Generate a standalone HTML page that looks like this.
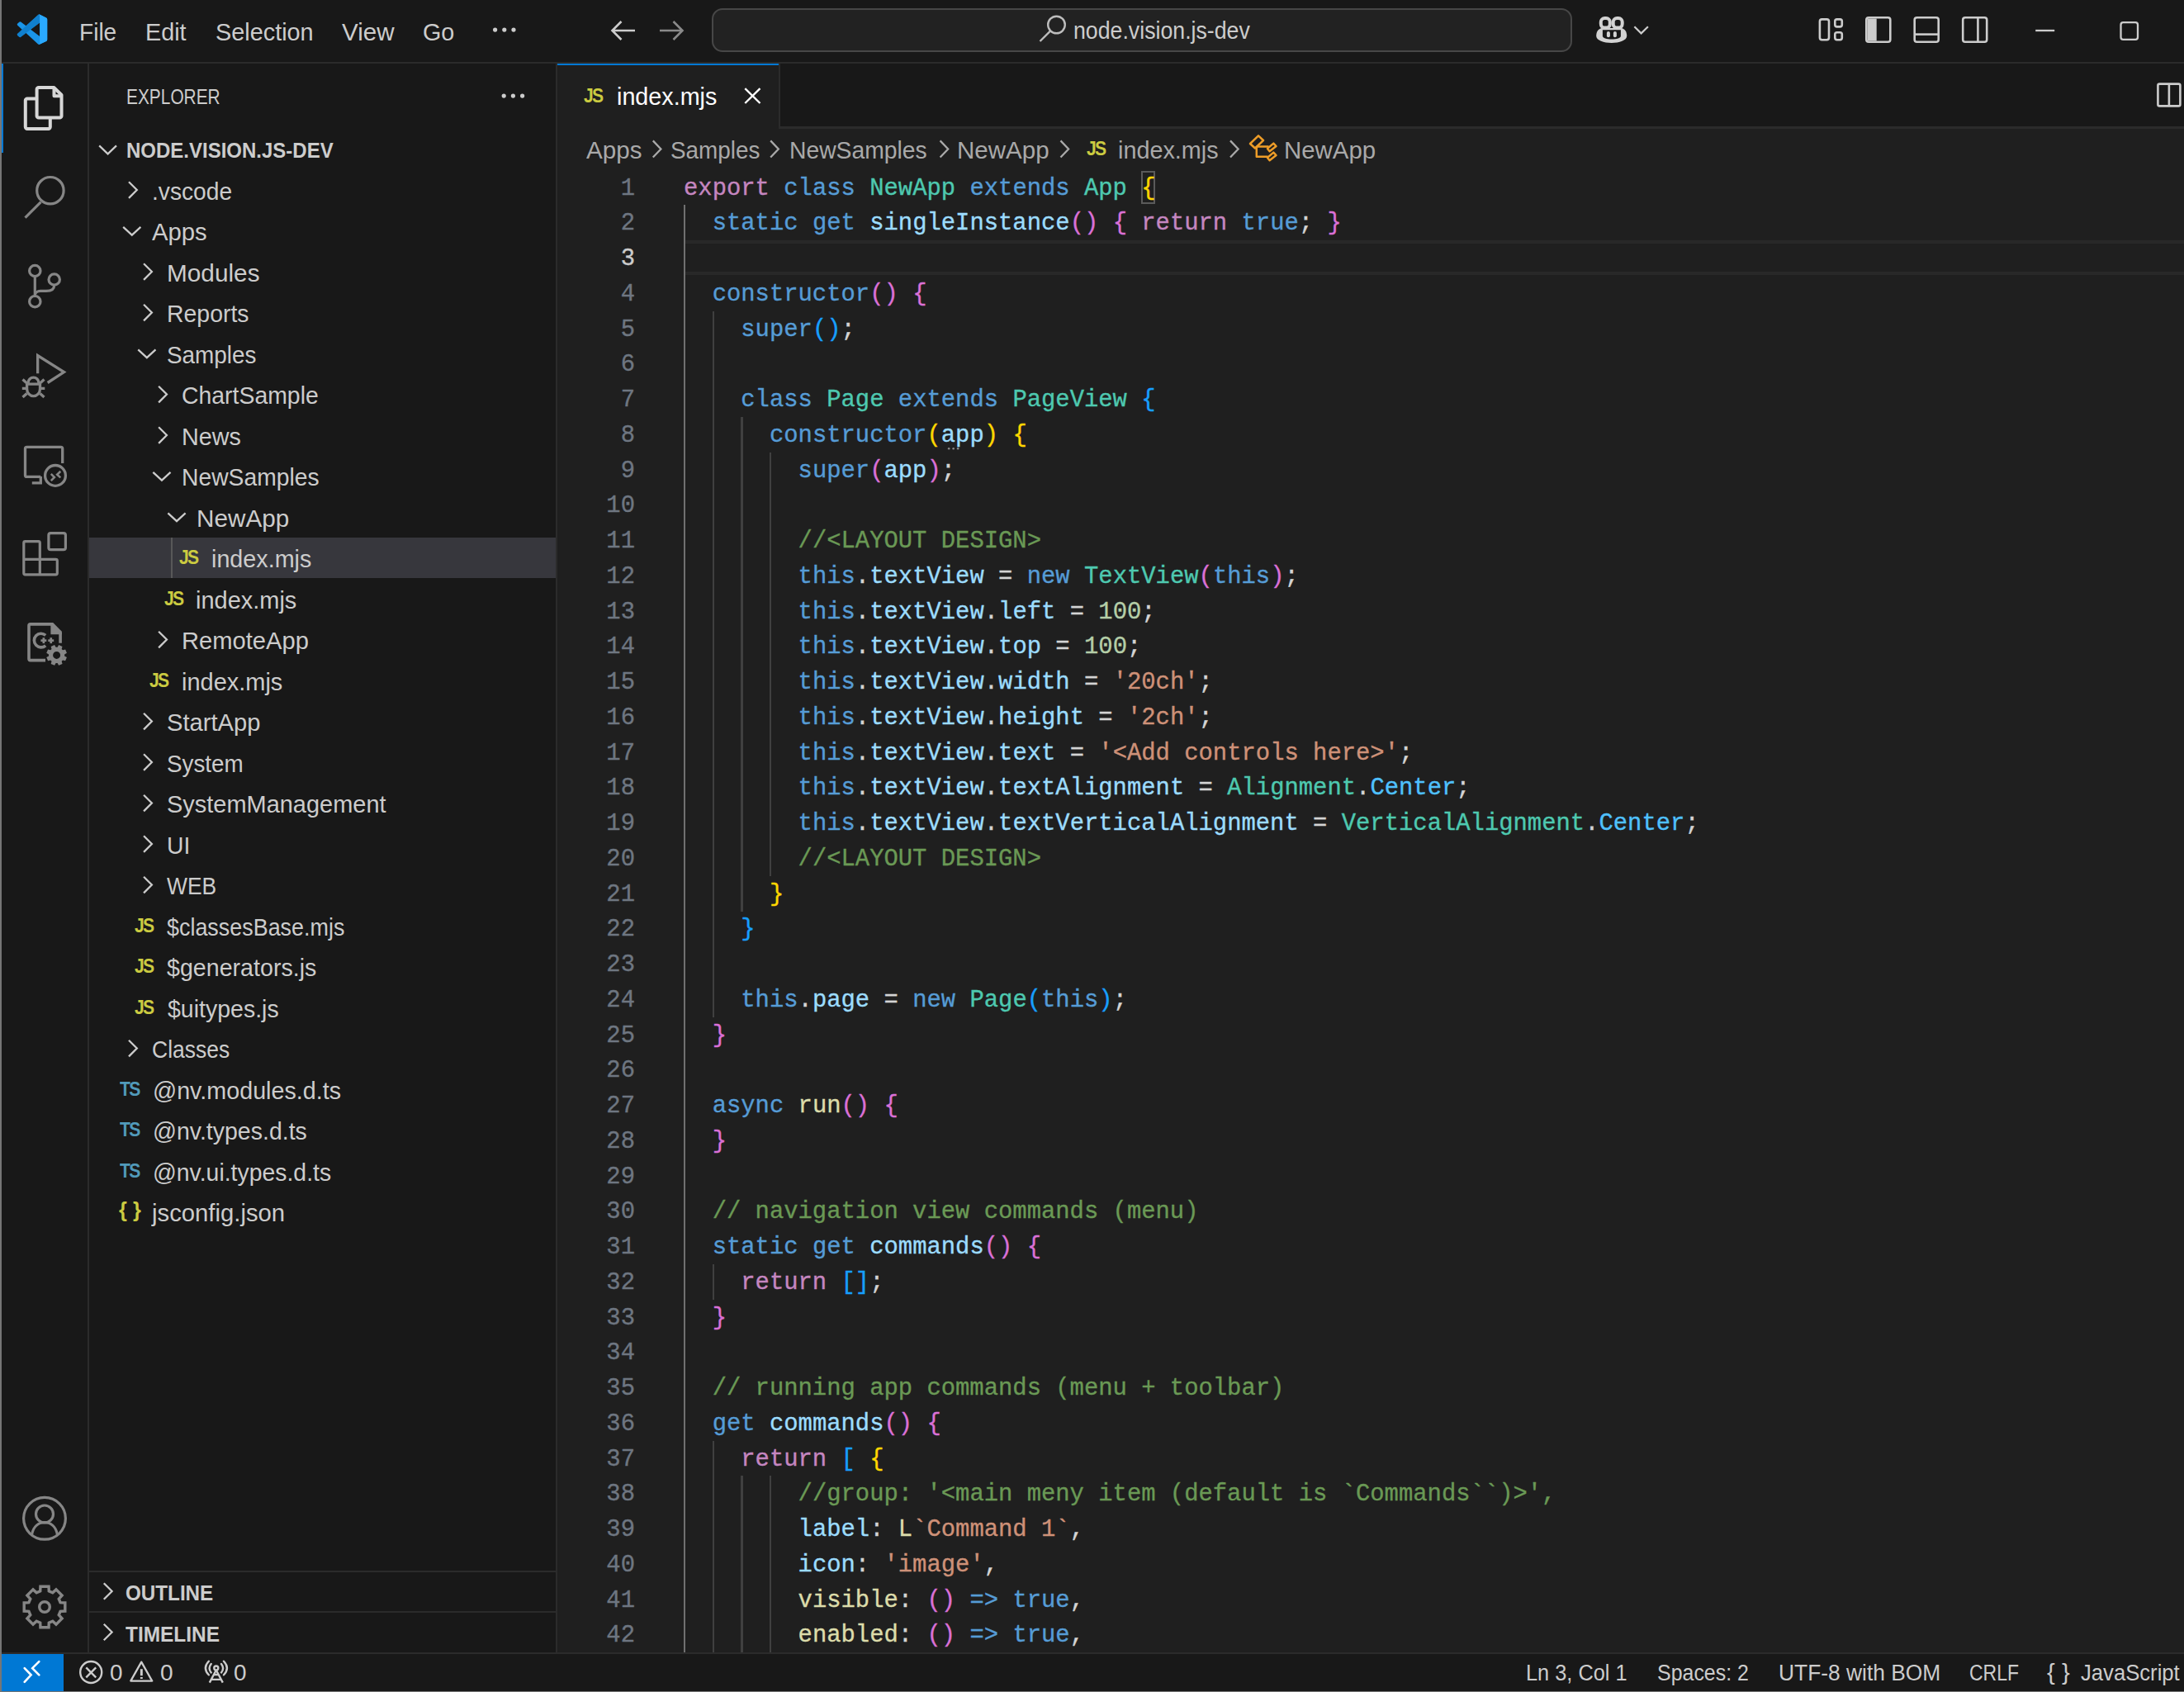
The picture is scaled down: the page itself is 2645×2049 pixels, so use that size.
<!DOCTYPE html>
<html><head><meta charset="utf-8"><style>
html,body{margin:0;padding:0;width:2645px;height:2049px;overflow:hidden;background:#181818}
.r{position:absolute}
.t{position:absolute;font-family:"Liberation Sans", sans-serif;white-space:pre}
.m{position:absolute;font-family:"Liberation Mono", monospace;white-space:pre;-webkit-text-stroke:0.35px currentColor}
svg{position:absolute;left:0;top:0}
</style></head><body>
<div class="r" style="left:0px;top:0px;width:2645px;height:75px;background:#181818;"></div>
<div class="r" style="left:0px;top:75px;width:2645px;height:2.2px;background:#2b2b2b;"></div>
<div class="r" style="left:0px;top:77px;width:106px;height:1924px;background:#181818;"></div>
<div class="r" style="left:105.8px;top:77px;width:2.3px;height:1924px;background:#2b2b2b;"></div>
<div class="r" style="left:108.1px;top:77px;width:564.9px;height:1924px;background:#181818;"></div>
<div class="r" style="left:672.8px;top:77px;width:2.2px;height:1924px;background:#2b2b2b;"></div>
<div class="r" style="left:675px;top:77px;width:1970px;height:1924px;background:#1f1f1f;"></div>
<div class="r" style="left:945px;top:77px;width:1700px;height:76.5px;background:#181818;"></div>
<div class="r" style="left:945px;top:153.3px;width:1700px;height:2.5px;background:#2b2b2b;"></div>
<div class="r" style="left:675px;top:77px;width:268px;height:78.8px;background:#1f1f1f;"></div>
<div class="r" style="left:675px;top:77px;width:268px;height:2.2px;background:#0078d4;"></div>
<div class="r" style="left:943px;top:77px;width:2.2px;height:78.8px;background:#2b2b2b;"></div>
<div class="r" style="left:0px;top:2001px;width:2645px;height:2.2px;background:#2b2b2b;"></div>
<div class="r" style="left:0px;top:2003.2px;width:2645px;height:46px;background:#181818;"></div>
<div class="r" style="left:2px;top:2003.2px;width:75px;height:45px;background:#0078d4;"></div>
<div class="r" style="left:0px;top:2047.8px;width:2645px;height:1.2px;background:#747474;"></div>
<div class="r" style="left:2px;top:77px;width:2.4px;height:108px;background:#0078d4;"></div>
<div class="r" style="left:0px;top:0px;width:1.9px;height:2049px;background:#767676;"></div>
<div class="t" style="left:96.08px;top:19.09px;font-size:29.25px;line-height:40.95px;color:#cccccc;font-weight:400;transform:scaleX(0.9595);transform-origin:0 0;">File</div>
<div class="t" style="left:175.68px;top:19.09px;font-size:29.25px;line-height:40.95px;color:#cccccc;font-weight:400;transform:scaleX(0.9846);transform-origin:0 0;">Edit</div>
<div class="t" style="left:260.68px;top:19.09px;font-size:29.25px;line-height:40.95px;color:#cccccc;font-weight:400;transform:scaleX(0.9859);transform-origin:0 0;">Selection</div>
<div class="t" style="left:413.68px;top:19.09px;font-size:29.25px;line-height:40.95px;color:#cccccc;font-weight:400;transform:scaleX(1.0120);transform-origin:0 0;">View</div>
<div class="t" style="left:511.68px;top:19.09px;font-size:29.25px;line-height:40.95px;color:#cccccc;font-weight:400;transform:scaleX(0.9821);transform-origin:0 0;">Go</div>
<div class="r" style="left:861.5px;top:10px;width:1042px;height:52.8px;box-sizing:border-box;border:2.2px solid #474747;border-radius:13px;background:#222222"></div>
<div class="t" style="left:1300.48px;top:16.99px;font-size:29.25px;line-height:40.95px;color:#cccccc;font-weight:400;transform:scaleX(0.9133);transform-origin:0 0;">node.vision.js-dev</div>
<div class="t" style="left:153.05px;top:99.51px;font-size:25.5px;line-height:35.70px;color:#cccccc;font-weight:400;transform:scaleX(0.8186);transform-origin:0 0;">EXPLORER</div>
<div class="t" style="left:153.07px;top:165.24px;font-size:25px;line-height:35.00px;color:#cccccc;font-weight:700;transform:scaleX(0.9597);transform-origin:0 0;">NODE.VISION.JS-DEV</div>
<div class="t" style="left:183.78px;top:211.99px;font-size:29.25px;line-height:40.95px;color:#cccccc;font-weight:400;transform:scaleX(0.9635);transform-origin:0 0;">.vscode</div>
<div class="t" style="left:183.78px;top:261.49px;font-size:29.25px;line-height:40.95px;color:#cccccc;font-weight:400;transform:scaleX(1.0009);transform-origin:0 0;">Apps</div>
<div class="t" style="left:202.08px;top:310.99px;font-size:29.25px;line-height:40.95px;color:#cccccc;font-weight:400;transform:scaleX(1.0178);transform-origin:0 0;">Modules</div>
<div class="t" style="left:202.08px;top:360.49px;font-size:29.25px;line-height:40.95px;color:#cccccc;font-weight:400;transform:scaleX(0.9718);transform-origin:0 0;">Reports</div>
<div class="t" style="left:202.08px;top:409.99px;font-size:29.25px;line-height:40.95px;color:#cccccc;font-weight:400;transform:scaleX(0.9527);transform-origin:0 0;">Samples</div>
<div class="t" style="left:219.78px;top:459.49px;font-size:29.25px;line-height:40.95px;color:#cccccc;font-weight:400;transform:scaleX(0.9709);transform-origin:0 0;">ChartSample</div>
<div class="t" style="left:219.78px;top:508.99px;font-size:29.25px;line-height:40.95px;color:#cccccc;font-weight:400;transform:scaleX(0.9848);transform-origin:0 0;">News</div>
<div class="t" style="left:219.78px;top:558.49px;font-size:29.25px;line-height:40.95px;color:#cccccc;font-weight:400;transform:scaleX(0.9669);transform-origin:0 0;">NewSamples</div>
<div class="t" style="left:238.08px;top:607.99px;font-size:29.25px;line-height:40.95px;color:#cccccc;font-weight:400;transform:scaleX(1.0151);transform-origin:0 0;">NewApp</div>
<div class="r" style="left:108.1px;top:650.8px;width:564.7px;height:49.5px;background:#37373d;"></div>
<div class="r" style="left:207px;top:650.8px;width:2.2px;height:49.5px;background:#585858;"></div>
<div class="t" style="left:217.28px;top:660.40px;font-size:23px;line-height:30px;color:#cbcb41;font-weight:700;letter-spacing:-1.8px;transform:scaleX(0.92);transform-origin:0 0">JS</div>
<div class="t" style="left:256.18px;top:657.49px;font-size:29.25px;line-height:40.95px;color:#cccccc;font-weight:400;transform:scaleX(0.9821);transform-origin:0 0;">index.mjs</div>
<div class="t" style="left:199.21px;top:709.90px;font-size:23px;line-height:30px;color:#cbcb41;font-weight:700;letter-spacing:-1.8px;transform:scaleX(0.92);transform-origin:0 0">JS</div>
<div class="t" style="left:237.48px;top:706.99px;font-size:29.25px;line-height:40.95px;color:#cccccc;font-weight:400;transform:scaleX(0.9902);transform-origin:0 0;">index.mjs</div>
<div class="t" style="left:219.78px;top:756.49px;font-size:29.25px;line-height:40.95px;color:#cccccc;font-weight:400;transform:scaleX(0.9965);transform-origin:0 0;">RemoteApp</div>
<div class="t" style="left:181.14px;top:808.90px;font-size:23px;line-height:30px;color:#cbcb41;font-weight:700;letter-spacing:-1.8px;transform:scaleX(0.92);transform-origin:0 0">JS</div>
<div class="t" style="left:219.78px;top:805.99px;font-size:29.25px;line-height:40.95px;color:#cccccc;font-weight:400;transform:scaleX(0.9902);transform-origin:0 0;">index.mjs</div>
<div class="t" style="left:202.08px;top:855.49px;font-size:29.25px;line-height:40.95px;color:#cccccc;font-weight:400;transform:scaleX(0.9965);transform-origin:0 0;">StartApp</div>
<div class="t" style="left:202.08px;top:904.99px;font-size:29.25px;line-height:40.95px;color:#cccccc;font-weight:400;transform:scaleX(0.9508);transform-origin:0 0;">System</div>
<div class="t" style="left:202.08px;top:954.49px;font-size:29.25px;line-height:40.95px;color:#cccccc;font-weight:400;transform:scaleX(0.9899);transform-origin:0 0;">SystemManagement</div>
<div class="t" style="left:202.08px;top:1003.99px;font-size:29.25px;line-height:40.95px;color:#cccccc;font-weight:400;transform:scaleX(0.9686);transform-origin:0 0;">UI</div>
<div class="t" style="left:202.08px;top:1053.49px;font-size:29.25px;line-height:40.95px;color:#cccccc;font-weight:400;transform:scaleX(0.9038);transform-origin:0 0;">WEB</div>
<div class="t" style="left:163.07px;top:1105.90px;font-size:23px;line-height:30px;color:#cbcb41;font-weight:700;letter-spacing:-1.8px;transform:scaleX(0.92);transform-origin:0 0">JS</div>
<div class="t" style="left:202.08px;top:1102.99px;font-size:29.25px;line-height:40.95px;color:#cccccc;font-weight:400;transform:scaleX(0.9199);transform-origin:0 0;">$classesBase.mjs</div>
<div class="t" style="left:163.07px;top:1155.40px;font-size:23px;line-height:30px;color:#cbcb41;font-weight:700;letter-spacing:-1.8px;transform:scaleX(0.92);transform-origin:0 0">JS</div>
<div class="t" style="left:202.08px;top:1152.49px;font-size:29.25px;line-height:40.95px;color:#cccccc;font-weight:400;transform:scaleX(0.9783);transform-origin:0 0;">$generators.js</div>
<div class="t" style="left:163.07px;top:1204.90px;font-size:23px;line-height:30px;color:#cbcb41;font-weight:700;letter-spacing:-1.8px;transform:scaleX(0.92);transform-origin:0 0">JS</div>
<div class="t" style="left:203.08px;top:1201.99px;font-size:29.25px;line-height:40.95px;color:#cccccc;font-weight:400;transform:scaleX(0.9742);transform-origin:0 0;">$uitypes.js</div>
<div class="t" style="left:183.88px;top:1251.49px;font-size:29.25px;line-height:40.95px;color:#cccccc;font-weight:400;transform:scaleX(0.9057);transform-origin:0 0;">Classes</div>
<div class="t" style="left:145.00px;top:1303.90px;font-size:23px;line-height:30px;color:#519aba;font-weight:700;letter-spacing:-1.8px;transform:scaleX(0.92);transform-origin:0 0">TS</div>
<div class="t" style="left:184.78px;top:1300.99px;font-size:29.25px;line-height:40.95px;color:#cccccc;font-weight:400;transform:scaleX(0.9813);transform-origin:0 0;">@nv.modules.d.ts</div>
<div class="t" style="left:145.00px;top:1353.40px;font-size:23px;line-height:30px;color:#519aba;font-weight:700;letter-spacing:-1.8px;transform:scaleX(0.92);transform-origin:0 0">TS</div>
<div class="t" style="left:184.78px;top:1350.49px;font-size:29.25px;line-height:40.95px;color:#cccccc;font-weight:400;transform:scaleX(0.9744);transform-origin:0 0;">@nv.types.d.ts</div>
<div class="t" style="left:145.00px;top:1402.90px;font-size:23px;line-height:30px;color:#519aba;font-weight:700;letter-spacing:-1.8px;transform:scaleX(0.92);transform-origin:0 0">TS</div>
<div class="t" style="left:184.78px;top:1399.99px;font-size:29.25px;line-height:40.95px;color:#cccccc;font-weight:400;transform:scaleX(0.9708);transform-origin:0 0;">@nv.ui.types.d.ts</div>
<div class="t" style="left:143.73px;top:1447.29px;font-size:26px;line-height:36.40px;color:#cbcb41;font-weight:700;transform:scaleX(0.9735);transform-origin:0 0;">{ }</div>
<div class="t" style="left:183.88px;top:1449.49px;font-size:29.25px;line-height:40.95px;color:#cccccc;font-weight:400;transform:scaleX(1.0010);transform-origin:0 0;">jsconfig.json</div>
<div class="r" style="left:108.1px;top:1902px;width:564.7px;height:2.1px;background:#2b2b2b;"></div>
<div class="r" style="left:108.1px;top:1951.2px;width:564.7px;height:2.1px;background:#2b2b2b;"></div>
<div class="t" style="left:151.88px;top:1912.44px;font-size:25px;line-height:35.00px;color:#cccccc;font-weight:700;transform:scaleX(0.9684);transform-origin:0 0;">OUTLINE</div>
<div class="t" style="left:151.88px;top:1961.84px;font-size:25px;line-height:35.00px;color:#cccccc;font-weight:700;transform:scaleX(0.9775);transform-origin:0 0;">TIMELINE</div>
<div class="t" style="left:707px;top:100.9px;font-size:23px;line-height:30px;color:#cbcb41;font-weight:700;letter-spacing:-1.8px;transform:scaleX(0.92);transform-origin:0 0">JS</div>
<div class="t" style="left:746.68px;top:97.39px;font-size:29.25px;line-height:40.95px;color:#ffffff;font-weight:400;transform:scaleX(0.9821);transform-origin:0 0;">index.mjs</div>
<div class="t" style="left:709.88px;top:162.19px;font-size:29.25px;line-height:40.95px;color:#a9a9a9;font-weight:400;transform:scaleX(1.0114);transform-origin:0 0;">Apps</div>
<div class="t" style="left:812.48px;top:162.19px;font-size:29.25px;line-height:40.95px;color:#a9a9a9;font-weight:400;transform:scaleX(0.9527);transform-origin:0 0;">Samples</div>
<div class="t" style="left:956.08px;top:162.19px;font-size:29.25px;line-height:40.95px;color:#a9a9a9;font-weight:400;transform:scaleX(0.9675);transform-origin:0 0;">NewSamples</div>
<div class="t" style="left:1158.68px;top:162.19px;font-size:29.25px;line-height:40.95px;color:#a9a9a9;font-weight:400;transform:scaleX(1.0097);transform-origin:0 0;">NewApp</div>
<div class="t" style="left:1315.5px;top:165px;font-size:23px;line-height:30px;color:#cbcb41;font-weight:700;letter-spacing:-1.8px;transform:scaleX(0.92);transform-origin:0 0">JS</div>
<div class="t" style="left:1354.38px;top:162.19px;font-size:29.25px;line-height:40.95px;color:#a9a9a9;font-weight:400;transform:scaleX(0.9845);transform-origin:0 0;">index.mjs</div>
<div class="t" style="left:1555.38px;top:162.19px;font-size:29.25px;line-height:40.95px;color:#a9a9a9;font-weight:400;transform:scaleX(1.0052);transform-origin:0 0;">NewApp</div>
<div class="r" style="left:828.0px;top:291.00px;width:1817.0px;height:42.25px;box-sizing:border-box;border-top:4px solid #282828;border-bottom:4px solid #282828;"></div>
<div class="r" style="left:828.20px;top:248.25px;width:2.2px;height:43.05px;background:#707070"></div>
<div class="r" style="left:828.20px;top:291.00px;width:2.2px;height:43.05px;background:#707070"></div>
<div class="r" style="left:828.20px;top:333.75px;width:2.2px;height:43.05px;background:#707070"></div>
<div class="r" style="left:828.20px;top:376.50px;width:2.2px;height:43.05px;background:#707070"></div>
<div class="r" style="left:862.84px;top:376.50px;width:2.2px;height:43.05px;background:#404040"></div>
<div class="r" style="left:828.20px;top:419.25px;width:2.2px;height:43.05px;background:#707070"></div>
<div class="r" style="left:862.84px;top:419.25px;width:2.2px;height:43.05px;background:#404040"></div>
<div class="r" style="left:828.20px;top:462.00px;width:2.2px;height:43.05px;background:#707070"></div>
<div class="r" style="left:862.84px;top:462.00px;width:2.2px;height:43.05px;background:#404040"></div>
<div class="r" style="left:828.20px;top:504.75px;width:2.2px;height:43.05px;background:#707070"></div>
<div class="r" style="left:862.84px;top:504.75px;width:2.2px;height:43.05px;background:#404040"></div>
<div class="r" style="left:897.47px;top:504.75px;width:2.2px;height:43.05px;background:#404040"></div>
<div class="r" style="left:828.20px;top:547.50px;width:2.2px;height:43.05px;background:#707070"></div>
<div class="r" style="left:862.84px;top:547.50px;width:2.2px;height:43.05px;background:#404040"></div>
<div class="r" style="left:897.47px;top:547.50px;width:2.2px;height:43.05px;background:#404040"></div>
<div class="r" style="left:932.11px;top:547.50px;width:2.2px;height:43.05px;background:#404040"></div>
<div class="r" style="left:828.20px;top:590.25px;width:2.2px;height:43.05px;background:#707070"></div>
<div class="r" style="left:862.84px;top:590.25px;width:2.2px;height:43.05px;background:#404040"></div>
<div class="r" style="left:897.47px;top:590.25px;width:2.2px;height:43.05px;background:#404040"></div>
<div class="r" style="left:932.11px;top:590.25px;width:2.2px;height:43.05px;background:#404040"></div>
<div class="r" style="left:828.20px;top:633.00px;width:2.2px;height:43.05px;background:#707070"></div>
<div class="r" style="left:862.84px;top:633.00px;width:2.2px;height:43.05px;background:#404040"></div>
<div class="r" style="left:897.47px;top:633.00px;width:2.2px;height:43.05px;background:#404040"></div>
<div class="r" style="left:932.11px;top:633.00px;width:2.2px;height:43.05px;background:#404040"></div>
<div class="r" style="left:828.20px;top:675.75px;width:2.2px;height:43.05px;background:#707070"></div>
<div class="r" style="left:862.84px;top:675.75px;width:2.2px;height:43.05px;background:#404040"></div>
<div class="r" style="left:897.47px;top:675.75px;width:2.2px;height:43.05px;background:#404040"></div>
<div class="r" style="left:932.11px;top:675.75px;width:2.2px;height:43.05px;background:#404040"></div>
<div class="r" style="left:828.20px;top:718.50px;width:2.2px;height:43.05px;background:#707070"></div>
<div class="r" style="left:862.84px;top:718.50px;width:2.2px;height:43.05px;background:#404040"></div>
<div class="r" style="left:897.47px;top:718.50px;width:2.2px;height:43.05px;background:#404040"></div>
<div class="r" style="left:932.11px;top:718.50px;width:2.2px;height:43.05px;background:#404040"></div>
<div class="r" style="left:828.20px;top:761.25px;width:2.2px;height:43.05px;background:#707070"></div>
<div class="r" style="left:862.84px;top:761.25px;width:2.2px;height:43.05px;background:#404040"></div>
<div class="r" style="left:897.47px;top:761.25px;width:2.2px;height:43.05px;background:#404040"></div>
<div class="r" style="left:932.11px;top:761.25px;width:2.2px;height:43.05px;background:#404040"></div>
<div class="r" style="left:828.20px;top:804.00px;width:2.2px;height:43.05px;background:#707070"></div>
<div class="r" style="left:862.84px;top:804.00px;width:2.2px;height:43.05px;background:#404040"></div>
<div class="r" style="left:897.47px;top:804.00px;width:2.2px;height:43.05px;background:#404040"></div>
<div class="r" style="left:932.11px;top:804.00px;width:2.2px;height:43.05px;background:#404040"></div>
<div class="r" style="left:828.20px;top:846.75px;width:2.2px;height:43.05px;background:#707070"></div>
<div class="r" style="left:862.84px;top:846.75px;width:2.2px;height:43.05px;background:#404040"></div>
<div class="r" style="left:897.47px;top:846.75px;width:2.2px;height:43.05px;background:#404040"></div>
<div class="r" style="left:932.11px;top:846.75px;width:2.2px;height:43.05px;background:#404040"></div>
<div class="r" style="left:828.20px;top:889.50px;width:2.2px;height:43.05px;background:#707070"></div>
<div class="r" style="left:862.84px;top:889.50px;width:2.2px;height:43.05px;background:#404040"></div>
<div class="r" style="left:897.47px;top:889.50px;width:2.2px;height:43.05px;background:#404040"></div>
<div class="r" style="left:932.11px;top:889.50px;width:2.2px;height:43.05px;background:#404040"></div>
<div class="r" style="left:828.20px;top:932.25px;width:2.2px;height:43.05px;background:#707070"></div>
<div class="r" style="left:862.84px;top:932.25px;width:2.2px;height:43.05px;background:#404040"></div>
<div class="r" style="left:897.47px;top:932.25px;width:2.2px;height:43.05px;background:#404040"></div>
<div class="r" style="left:932.11px;top:932.25px;width:2.2px;height:43.05px;background:#404040"></div>
<div class="r" style="left:828.20px;top:975.00px;width:2.2px;height:43.05px;background:#707070"></div>
<div class="r" style="left:862.84px;top:975.00px;width:2.2px;height:43.05px;background:#404040"></div>
<div class="r" style="left:897.47px;top:975.00px;width:2.2px;height:43.05px;background:#404040"></div>
<div class="r" style="left:932.11px;top:975.00px;width:2.2px;height:43.05px;background:#404040"></div>
<div class="r" style="left:828.20px;top:1017.75px;width:2.2px;height:43.05px;background:#707070"></div>
<div class="r" style="left:862.84px;top:1017.75px;width:2.2px;height:43.05px;background:#404040"></div>
<div class="r" style="left:897.47px;top:1017.75px;width:2.2px;height:43.05px;background:#404040"></div>
<div class="r" style="left:932.11px;top:1017.75px;width:2.2px;height:43.05px;background:#404040"></div>
<div class="r" style="left:828.20px;top:1060.50px;width:2.2px;height:43.05px;background:#707070"></div>
<div class="r" style="left:862.84px;top:1060.50px;width:2.2px;height:43.05px;background:#404040"></div>
<div class="r" style="left:897.47px;top:1060.50px;width:2.2px;height:43.05px;background:#404040"></div>
<div class="r" style="left:828.20px;top:1103.25px;width:2.2px;height:43.05px;background:#707070"></div>
<div class="r" style="left:862.84px;top:1103.25px;width:2.2px;height:43.05px;background:#404040"></div>
<div class="r" style="left:828.20px;top:1146.00px;width:2.2px;height:43.05px;background:#707070"></div>
<div class="r" style="left:862.84px;top:1146.00px;width:2.2px;height:43.05px;background:#404040"></div>
<div class="r" style="left:828.20px;top:1188.75px;width:2.2px;height:43.05px;background:#707070"></div>
<div class="r" style="left:862.84px;top:1188.75px;width:2.2px;height:43.05px;background:#404040"></div>
<div class="r" style="left:828.20px;top:1231.50px;width:2.2px;height:43.05px;background:#707070"></div>
<div class="r" style="left:828.20px;top:1274.25px;width:2.2px;height:43.05px;background:#707070"></div>
<div class="r" style="left:828.20px;top:1317.00px;width:2.2px;height:43.05px;background:#707070"></div>
<div class="r" style="left:828.20px;top:1359.75px;width:2.2px;height:43.05px;background:#707070"></div>
<div class="r" style="left:828.20px;top:1402.50px;width:2.2px;height:43.05px;background:#707070"></div>
<div class="r" style="left:828.20px;top:1445.25px;width:2.2px;height:43.05px;background:#707070"></div>
<div class="r" style="left:828.20px;top:1488.00px;width:2.2px;height:43.05px;background:#707070"></div>
<div class="r" style="left:828.20px;top:1530.75px;width:2.2px;height:43.05px;background:#707070"></div>
<div class="r" style="left:862.84px;top:1530.75px;width:2.2px;height:43.05px;background:#404040"></div>
<div class="r" style="left:828.20px;top:1573.50px;width:2.2px;height:43.05px;background:#707070"></div>
<div class="r" style="left:828.20px;top:1616.25px;width:2.2px;height:43.05px;background:#707070"></div>
<div class="r" style="left:828.20px;top:1659.00px;width:2.2px;height:43.05px;background:#707070"></div>
<div class="r" style="left:828.20px;top:1701.75px;width:2.2px;height:43.05px;background:#707070"></div>
<div class="r" style="left:828.20px;top:1744.50px;width:2.2px;height:43.05px;background:#707070"></div>
<div class="r" style="left:862.84px;top:1744.50px;width:2.2px;height:43.05px;background:#404040"></div>
<div class="r" style="left:828.20px;top:1787.25px;width:2.2px;height:43.05px;background:#707070"></div>
<div class="r" style="left:862.84px;top:1787.25px;width:2.2px;height:43.05px;background:#404040"></div>
<div class="r" style="left:897.47px;top:1787.25px;width:2.2px;height:43.05px;background:#404040"></div>
<div class="r" style="left:932.11px;top:1787.25px;width:2.2px;height:43.05px;background:#404040"></div>
<div class="r" style="left:828.20px;top:1830.00px;width:2.2px;height:43.05px;background:#707070"></div>
<div class="r" style="left:862.84px;top:1830.00px;width:2.2px;height:43.05px;background:#404040"></div>
<div class="r" style="left:897.47px;top:1830.00px;width:2.2px;height:43.05px;background:#404040"></div>
<div class="r" style="left:932.11px;top:1830.00px;width:2.2px;height:43.05px;background:#404040"></div>
<div class="r" style="left:828.20px;top:1872.75px;width:2.2px;height:43.05px;background:#707070"></div>
<div class="r" style="left:862.84px;top:1872.75px;width:2.2px;height:43.05px;background:#404040"></div>
<div class="r" style="left:897.47px;top:1872.75px;width:2.2px;height:43.05px;background:#404040"></div>
<div class="r" style="left:932.11px;top:1872.75px;width:2.2px;height:43.05px;background:#404040"></div>
<div class="r" style="left:828.20px;top:1915.50px;width:2.2px;height:43.05px;background:#707070"></div>
<div class="r" style="left:862.84px;top:1915.50px;width:2.2px;height:43.05px;background:#404040"></div>
<div class="r" style="left:897.47px;top:1915.50px;width:2.2px;height:43.05px;background:#404040"></div>
<div class="r" style="left:932.11px;top:1915.50px;width:2.2px;height:43.05px;background:#404040"></div>
<div class="r" style="left:828.20px;top:1958.25px;width:2.2px;height:43.05px;background:#707070"></div>
<div class="r" style="left:862.84px;top:1958.25px;width:2.2px;height:43.05px;background:#404040"></div>
<div class="r" style="left:897.47px;top:1958.25px;width:2.2px;height:43.05px;background:#404040"></div>
<div class="r" style="left:932.11px;top:1958.25px;width:2.2px;height:43.05px;background:#404040"></div>
<div class="r" style="left:1382.18px;top:206.50px;width:17.32px;height:40.75px;box-sizing:border-box;border:2px solid #5a5a5a;"></div>
<div class="m" style="left:751.68px;top:207.74px;font-size:28.87px;line-height:42.75px;color:#6e7681">1</div>
<div class="m" style="left:828.00px;top:207.74px;font-size:28.87px;line-height:42.75px;"><span style="color:#c586c0">export</span><span style="color:#d4d4d4"> </span><span style="color:#569cd6">class</span><span style="color:#d4d4d4"> </span><span style="color:#4ec9b0">NewApp</span><span style="color:#d4d4d4"> </span><span style="color:#569cd6">extends</span><span style="color:#d4d4d4"> </span><span style="color:#4ec9b0">App</span><span style="color:#d4d4d4"> </span><span style="color:#ffd700">{</span></div>
<div class="m" style="left:751.68px;top:250.49px;font-size:28.87px;line-height:42.75px;color:#6e7681">2</div>
<div class="m" style="left:828.00px;top:250.49px;font-size:28.87px;line-height:42.75px;"><span style="color:#d4d4d4">  </span><span style="color:#569cd6">static</span><span style="color:#d4d4d4"> </span><span style="color:#569cd6">get</span><span style="color:#d4d4d4"> </span><span style="color:#9cdcfe">singleInstance</span><span style="color:#da70d6">()</span><span style="color:#d4d4d4"> </span><span style="color:#da70d6">{</span><span style="color:#d4d4d4"> </span><span style="color:#c586c0">return</span><span style="color:#d4d4d4"> </span><span style="color:#569cd6">true</span><span style="color:#d4d4d4">; </span><span style="color:#da70d6">}</span></div>
<div class="m" style="left:751.68px;top:293.24px;font-size:28.87px;line-height:42.75px;color:#cccccc">3</div>
<div class="m" style="left:751.68px;top:335.99px;font-size:28.87px;line-height:42.75px;color:#6e7681">4</div>
<div class="m" style="left:828.00px;top:335.99px;font-size:28.87px;line-height:42.75px;"><span style="color:#d4d4d4">  </span><span style="color:#569cd6">constructor</span><span style="color:#da70d6">()</span><span style="color:#d4d4d4"> </span><span style="color:#da70d6">{</span></div>
<div class="m" style="left:751.68px;top:378.74px;font-size:28.87px;line-height:42.75px;color:#6e7681">5</div>
<div class="m" style="left:828.00px;top:378.74px;font-size:28.87px;line-height:42.75px;"><span style="color:#d4d4d4">    </span><span style="color:#569cd6">super</span><span style="color:#179fff">()</span><span style="color:#d4d4d4">;</span></div>
<div class="m" style="left:751.68px;top:421.49px;font-size:28.87px;line-height:42.75px;color:#6e7681">6</div>
<div class="m" style="left:751.68px;top:464.24px;font-size:28.87px;line-height:42.75px;color:#6e7681">7</div>
<div class="m" style="left:828.00px;top:464.24px;font-size:28.87px;line-height:42.75px;"><span style="color:#d4d4d4">    </span><span style="color:#569cd6">class</span><span style="color:#d4d4d4"> </span><span style="color:#4ec9b0">Page</span><span style="color:#d4d4d4"> </span><span style="color:#569cd6">extends</span><span style="color:#d4d4d4"> </span><span style="color:#4ec9b0">PageView</span><span style="color:#d4d4d4"> </span><span style="color:#179fff">{</span></div>
<div class="m" style="left:751.68px;top:506.99px;font-size:28.87px;line-height:42.75px;color:#6e7681">8</div>
<div class="m" style="left:828.00px;top:506.99px;font-size:28.87px;line-height:42.75px;"><span style="color:#d4d4d4">      </span><span style="color:#569cd6">constructor</span><span style="color:#ffd700">(</span><span style="color:#9cdcfe">app</span><span style="color:#ffd700">)</span><span style="color:#d4d4d4"> </span><span style="color:#ffd700">{</span></div>
<div class="m" style="left:751.68px;top:549.74px;font-size:28.87px;line-height:42.75px;color:#6e7681">9</div>
<div class="m" style="left:828.00px;top:549.74px;font-size:28.87px;line-height:42.75px;"><span style="color:#d4d4d4">        </span><span style="color:#569cd6">super</span><span style="color:#da70d6">(</span><span style="color:#9cdcfe">app</span><span style="color:#da70d6">)</span><span style="color:#d4d4d4">;</span></div>
<div class="m" style="left:734.36px;top:592.49px;font-size:28.87px;line-height:42.75px;color:#6e7681">10</div>
<div class="m" style="left:734.36px;top:635.24px;font-size:28.87px;line-height:42.75px;color:#6e7681">11</div>
<div class="m" style="left:828.00px;top:635.24px;font-size:28.87px;line-height:42.75px;"><span style="color:#d4d4d4">        </span><span style="color:#6a9955">//&lt;LAYOUT DESIGN&gt;</span></div>
<div class="m" style="left:734.36px;top:677.99px;font-size:28.87px;line-height:42.75px;color:#6e7681">12</div>
<div class="m" style="left:828.00px;top:677.99px;font-size:28.87px;line-height:42.75px;"><span style="color:#d4d4d4">        </span><span style="color:#569cd6">this</span><span style="color:#d4d4d4">.</span><span style="color:#9cdcfe">textView</span><span style="color:#d4d4d4"> = </span><span style="color:#569cd6">new</span><span style="color:#d4d4d4"> </span><span style="color:#4ec9b0">TextView</span><span style="color:#da70d6">(</span><span style="color:#569cd6">this</span><span style="color:#da70d6">)</span><span style="color:#d4d4d4">;</span></div>
<div class="m" style="left:734.36px;top:720.74px;font-size:28.87px;line-height:42.75px;color:#6e7681">13</div>
<div class="m" style="left:828.00px;top:720.74px;font-size:28.87px;line-height:42.75px;"><span style="color:#d4d4d4">        </span><span style="color:#569cd6">this</span><span style="color:#d4d4d4">.</span><span style="color:#9cdcfe">textView</span><span style="color:#d4d4d4">.</span><span style="color:#9cdcfe">left</span><span style="color:#d4d4d4"> = </span><span style="color:#b5cea8">100</span><span style="color:#d4d4d4">;</span></div>
<div class="m" style="left:734.36px;top:763.49px;font-size:28.87px;line-height:42.75px;color:#6e7681">14</div>
<div class="m" style="left:828.00px;top:763.49px;font-size:28.87px;line-height:42.75px;"><span style="color:#d4d4d4">        </span><span style="color:#569cd6">this</span><span style="color:#d4d4d4">.</span><span style="color:#9cdcfe">textView</span><span style="color:#d4d4d4">.</span><span style="color:#9cdcfe">top</span><span style="color:#d4d4d4"> = </span><span style="color:#b5cea8">100</span><span style="color:#d4d4d4">;</span></div>
<div class="m" style="left:734.36px;top:806.24px;font-size:28.87px;line-height:42.75px;color:#6e7681">15</div>
<div class="m" style="left:828.00px;top:806.24px;font-size:28.87px;line-height:42.75px;"><span style="color:#d4d4d4">        </span><span style="color:#569cd6">this</span><span style="color:#d4d4d4">.</span><span style="color:#9cdcfe">textView</span><span style="color:#d4d4d4">.</span><span style="color:#9cdcfe">width</span><span style="color:#d4d4d4"> = </span><span style="color:#ce9178">'20ch'</span><span style="color:#d4d4d4">;</span></div>
<div class="m" style="left:734.36px;top:848.99px;font-size:28.87px;line-height:42.75px;color:#6e7681">16</div>
<div class="m" style="left:828.00px;top:848.99px;font-size:28.87px;line-height:42.75px;"><span style="color:#d4d4d4">        </span><span style="color:#569cd6">this</span><span style="color:#d4d4d4">.</span><span style="color:#9cdcfe">textView</span><span style="color:#d4d4d4">.</span><span style="color:#9cdcfe">height</span><span style="color:#d4d4d4"> = </span><span style="color:#ce9178">'2ch'</span><span style="color:#d4d4d4">;</span></div>
<div class="m" style="left:734.36px;top:891.74px;font-size:28.87px;line-height:42.75px;color:#6e7681">17</div>
<div class="m" style="left:828.00px;top:891.74px;font-size:28.87px;line-height:42.75px;"><span style="color:#d4d4d4">        </span><span style="color:#569cd6">this</span><span style="color:#d4d4d4">.</span><span style="color:#9cdcfe">textView</span><span style="color:#d4d4d4">.</span><span style="color:#9cdcfe">text</span><span style="color:#d4d4d4"> = </span><span style="color:#ce9178">'&lt;Add controls here&gt;'</span><span style="color:#d4d4d4">;</span></div>
<div class="m" style="left:734.36px;top:934.49px;font-size:28.87px;line-height:42.75px;color:#6e7681">18</div>
<div class="m" style="left:828.00px;top:934.49px;font-size:28.87px;line-height:42.75px;"><span style="color:#d4d4d4">        </span><span style="color:#569cd6">this</span><span style="color:#d4d4d4">.</span><span style="color:#9cdcfe">textView</span><span style="color:#d4d4d4">.</span><span style="color:#9cdcfe">textAlignment</span><span style="color:#d4d4d4"> = </span><span style="color:#4ec9b0">Alignment</span><span style="color:#d4d4d4">.</span><span style="color:#4fc1ff">Center</span><span style="color:#d4d4d4">;</span></div>
<div class="m" style="left:734.36px;top:977.24px;font-size:28.87px;line-height:42.75px;color:#6e7681">19</div>
<div class="m" style="left:828.00px;top:977.24px;font-size:28.87px;line-height:42.75px;"><span style="color:#d4d4d4">        </span><span style="color:#569cd6">this</span><span style="color:#d4d4d4">.</span><span style="color:#9cdcfe">textView</span><span style="color:#d4d4d4">.</span><span style="color:#9cdcfe">textVerticalAlignment</span><span style="color:#d4d4d4"> = </span><span style="color:#4ec9b0">VerticalAlignment</span><span style="color:#d4d4d4">.</span><span style="color:#4fc1ff">Center</span><span style="color:#d4d4d4">;</span></div>
<div class="m" style="left:734.36px;top:1019.99px;font-size:28.87px;line-height:42.75px;color:#6e7681">20</div>
<div class="m" style="left:828.00px;top:1019.99px;font-size:28.87px;line-height:42.75px;"><span style="color:#d4d4d4">        </span><span style="color:#6a9955">//&lt;LAYOUT DESIGN&gt;</span></div>
<div class="m" style="left:734.36px;top:1062.74px;font-size:28.87px;line-height:42.75px;color:#6e7681">21</div>
<div class="m" style="left:828.00px;top:1062.74px;font-size:28.87px;line-height:42.75px;"><span style="color:#d4d4d4">      </span><span style="color:#ffd700">}</span></div>
<div class="m" style="left:734.36px;top:1105.49px;font-size:28.87px;line-height:42.75px;color:#6e7681">22</div>
<div class="m" style="left:828.00px;top:1105.49px;font-size:28.87px;line-height:42.75px;"><span style="color:#d4d4d4">    </span><span style="color:#179fff">}</span></div>
<div class="m" style="left:734.36px;top:1148.24px;font-size:28.87px;line-height:42.75px;color:#6e7681">23</div>
<div class="m" style="left:734.36px;top:1190.99px;font-size:28.87px;line-height:42.75px;color:#6e7681">24</div>
<div class="m" style="left:828.00px;top:1190.99px;font-size:28.87px;line-height:42.75px;"><span style="color:#d4d4d4">    </span><span style="color:#569cd6">this</span><span style="color:#d4d4d4">.</span><span style="color:#9cdcfe">page</span><span style="color:#d4d4d4"> = </span><span style="color:#569cd6">new</span><span style="color:#d4d4d4"> </span><span style="color:#4ec9b0">Page</span><span style="color:#179fff">(</span><span style="color:#569cd6">this</span><span style="color:#179fff">)</span><span style="color:#d4d4d4">;</span></div>
<div class="m" style="left:734.36px;top:1233.74px;font-size:28.87px;line-height:42.75px;color:#6e7681">25</div>
<div class="m" style="left:828.00px;top:1233.74px;font-size:28.87px;line-height:42.75px;"><span style="color:#d4d4d4">  </span><span style="color:#da70d6">}</span></div>
<div class="m" style="left:734.36px;top:1276.49px;font-size:28.87px;line-height:42.75px;color:#6e7681">26</div>
<div class="m" style="left:734.36px;top:1319.24px;font-size:28.87px;line-height:42.75px;color:#6e7681">27</div>
<div class="m" style="left:828.00px;top:1319.24px;font-size:28.87px;line-height:42.75px;"><span style="color:#d4d4d4">  </span><span style="color:#569cd6">async</span><span style="color:#d4d4d4"> </span><span style="color:#dcdcaa">run</span><span style="color:#da70d6">()</span><span style="color:#d4d4d4"> </span><span style="color:#da70d6">{</span></div>
<div class="m" style="left:734.36px;top:1361.99px;font-size:28.87px;line-height:42.75px;color:#6e7681">28</div>
<div class="m" style="left:828.00px;top:1361.99px;font-size:28.87px;line-height:42.75px;"><span style="color:#d4d4d4">  </span><span style="color:#da70d6">}</span></div>
<div class="m" style="left:734.36px;top:1404.74px;font-size:28.87px;line-height:42.75px;color:#6e7681">29</div>
<div class="m" style="left:734.36px;top:1447.49px;font-size:28.87px;line-height:42.75px;color:#6e7681">30</div>
<div class="m" style="left:828.00px;top:1447.49px;font-size:28.87px;line-height:42.75px;"><span style="color:#d4d4d4">  </span><span style="color:#6a9955">// navigation view commands (menu)</span></div>
<div class="m" style="left:734.36px;top:1490.24px;font-size:28.87px;line-height:42.75px;color:#6e7681">31</div>
<div class="m" style="left:828.00px;top:1490.24px;font-size:28.87px;line-height:42.75px;"><span style="color:#d4d4d4">  </span><span style="color:#569cd6">static</span><span style="color:#d4d4d4"> </span><span style="color:#569cd6">get</span><span style="color:#d4d4d4"> </span><span style="color:#9cdcfe">commands</span><span style="color:#da70d6">()</span><span style="color:#d4d4d4"> </span><span style="color:#da70d6">{</span></div>
<div class="m" style="left:734.36px;top:1532.99px;font-size:28.87px;line-height:42.75px;color:#6e7681">32</div>
<div class="m" style="left:828.00px;top:1532.99px;font-size:28.87px;line-height:42.75px;"><span style="color:#d4d4d4">    </span><span style="color:#c586c0">return</span><span style="color:#d4d4d4"> </span><span style="color:#179fff">[]</span><span style="color:#d4d4d4">;</span></div>
<div class="m" style="left:734.36px;top:1575.74px;font-size:28.87px;line-height:42.75px;color:#6e7681">33</div>
<div class="m" style="left:828.00px;top:1575.74px;font-size:28.87px;line-height:42.75px;"><span style="color:#d4d4d4">  </span><span style="color:#da70d6">}</span></div>
<div class="m" style="left:734.36px;top:1618.49px;font-size:28.87px;line-height:42.75px;color:#6e7681">34</div>
<div class="m" style="left:734.36px;top:1661.24px;font-size:28.87px;line-height:42.75px;color:#6e7681">35</div>
<div class="m" style="left:828.00px;top:1661.24px;font-size:28.87px;line-height:42.75px;"><span style="color:#d4d4d4">  </span><span style="color:#6a9955">// running app commands (menu + toolbar)</span></div>
<div class="m" style="left:734.36px;top:1703.99px;font-size:28.87px;line-height:42.75px;color:#6e7681">36</div>
<div class="m" style="left:828.00px;top:1703.99px;font-size:28.87px;line-height:42.75px;"><span style="color:#d4d4d4">  </span><span style="color:#569cd6">get</span><span style="color:#d4d4d4"> </span><span style="color:#9cdcfe">commands</span><span style="color:#da70d6">()</span><span style="color:#d4d4d4"> </span><span style="color:#da70d6">{</span></div>
<div class="m" style="left:734.36px;top:1746.74px;font-size:28.87px;line-height:42.75px;color:#6e7681">37</div>
<div class="m" style="left:828.00px;top:1746.74px;font-size:28.87px;line-height:42.75px;"><span style="color:#d4d4d4">    </span><span style="color:#c586c0">return</span><span style="color:#d4d4d4"> </span><span style="color:#179fff">[</span><span style="color:#d4d4d4"> </span><span style="color:#ffd700">{</span></div>
<div class="m" style="left:734.36px;top:1789.49px;font-size:28.87px;line-height:42.75px;color:#6e7681">38</div>
<div class="m" style="left:828.00px;top:1789.49px;font-size:28.87px;line-height:42.75px;"><span style="color:#d4d4d4">        </span><span style="color:#6a9955">//group: '&lt;main meny item (default is `Commands``)&gt;',</span></div>
<div class="m" style="left:734.36px;top:1832.24px;font-size:28.87px;line-height:42.75px;color:#6e7681">39</div>
<div class="m" style="left:828.00px;top:1832.24px;font-size:28.87px;line-height:42.75px;"><span style="color:#d4d4d4">        </span><span style="color:#9cdcfe">label</span><span style="color:#d4d4d4">: </span><span style="color:#dcdcaa">L</span><span style="color:#ce9178">`Command 1`</span><span style="color:#d4d4d4">,</span></div>
<div class="m" style="left:734.36px;top:1874.99px;font-size:28.87px;line-height:42.75px;color:#6e7681">40</div>
<div class="m" style="left:828.00px;top:1874.99px;font-size:28.87px;line-height:42.75px;"><span style="color:#d4d4d4">        </span><span style="color:#9cdcfe">icon</span><span style="color:#d4d4d4">: </span><span style="color:#ce9178">'image'</span><span style="color:#d4d4d4">,</span></div>
<div class="m" style="left:734.36px;top:1917.74px;font-size:28.87px;line-height:42.75px;color:#6e7681">41</div>
<div class="m" style="left:828.00px;top:1917.74px;font-size:28.87px;line-height:42.75px;"><span style="color:#d4d4d4">        </span><span style="color:#dcdcaa">visible</span><span style="color:#d4d4d4">: </span><span style="color:#da70d6">()</span><span style="color:#d4d4d4"> </span><span style="color:#569cd6">=&gt;</span><span style="color:#d4d4d4"> </span><span style="color:#569cd6">true</span><span style="color:#d4d4d4">,</span></div>
<div class="m" style="left:734.36px;top:1960.49px;font-size:28.87px;line-height:42.75px;color:#6e7681">42</div>
<div class="m" style="left:828.00px;top:1960.49px;font-size:28.87px;line-height:42.75px;"><span style="color:#d4d4d4">        </span><span style="color:#dcdcaa">enabled</span><span style="color:#d4d4d4">: </span><span style="color:#da70d6">()</span><span style="color:#d4d4d4"> </span><span style="color:#569cd6">=&gt;</span><span style="color:#d4d4d4"> </span><span style="color:#569cd6">true</span><span style="color:#d4d4d4">,</span></div>
<div class="t" style="left:133.09px;top:2007.74px;font-size:27px;line-height:37.80px;color:#cccccc;font-weight:400;transform:scaleX(1.0332);transform-origin:0 0;">0</div>
<div class="t" style="left:193.78px;top:2007.74px;font-size:27px;line-height:37.80px;color:#cccccc;font-weight:400;transform:scaleX(1.0398);transform-origin:0 0;">0</div>
<div class="t" style="left:283.39px;top:2007.74px;font-size:27px;line-height:37.80px;color:#cccccc;font-weight:400;transform:scaleX(1.0332);transform-origin:0 0;">0</div>
<div class="t" style="left:1847.59px;top:2007.74px;font-size:27px;line-height:37.80px;color:#cccccc;font-weight:400;transform:scaleX(0.9383);transform-origin:0 0;">Ln 3, Col 1</div>
<div class="t" style="left:2007.09px;top:2007.74px;font-size:27px;line-height:37.80px;color:#cccccc;font-weight:400;transform:scaleX(0.9238);transform-origin:0 0;">Spaces: 2</div>
<div class="t" style="left:2153.59px;top:2007.74px;font-size:27px;line-height:37.80px;color:#cccccc;font-weight:400;transform:scaleX(0.9762);transform-origin:0 0;">UTF-8 with BOM</div>
<div class="t" style="left:2385.48px;top:2007.74px;font-size:27px;line-height:37.80px;color:#cccccc;font-weight:400;transform:scaleX(0.8513);transform-origin:0 0;">CRLF</div>
<div class="t" style="left:2520.09px;top:2007.74px;font-size:27px;line-height:37.80px;color:#cccccc;font-weight:400;transform:scaleX(0.9498);transform-origin:0 0;">JavaScript</div>
<div class="t" style="left:2478.78px;top:2006.74px;font-size:27px;line-height:37.80px;color:#cccccc;font-weight:400;transform:scaleX(1.0855);transform-origin:0 0;">{ }</div>
<svg width="2645" height="2049" viewBox="0 0 2645 2049">
<g transform="translate(20.8,17.5) scale(0.364)"><path fill="#1a95e8" d="M96.46 10.8L75.86.87a6.23 6.23 0 00-7.1 1.2L29.35 38.04 12.18 25.01a4.16 4.16 0 00-5.32.24L1.36 30.26a4.17 4.17 0 000 6.16L16.25 50 1.36 63.58a4.17 4.17 0 000 6.16l5.5 5a4.16 4.16 0 005.32.24l17.17-13.03 39.41 35.96a6.22 6.22 0 007.1 1.2l20.6-9.92a6.25 6.25 0 003.54-5.63V16.43a6.25 6.25 0 00-3.54-5.63zM75.01 72.7L45.1 50l29.91-22.7v45.4z"/><path fill="#0a6fb8" opacity="0.55" d="M75.01 27.3L29.35 61.96 12.18 74.99a4.16 4.16 0 01-5.32-.24l-5.5-5a4.17 4.17 0 010-6.16L68.76 2.07a6.23 6.23 0 017.1-1.2z"/><path fill="#2aa9ff" d="M75.86.87l20.6 9.93a6.25 6.25 0 013.54 5.63v67.14a6.25 6.25 0 01-3.54 5.63l-20.6 9.92a6.22 6.22 0 01-7.1-1.2 3.66 3.66 0 006.25-2.59V4.66A3.66 3.66 0 0068.76 2.07a6.23 6.23 0 017.1-1.2z"/></g>
<g fill="none" stroke="#d7d7d7" stroke-width="4" stroke-linejoin="round"><path d="M44.5 119.4 H33 a2.2 2.2 0 0 0 -2.2 2.2 V153.8 a2.2 2.2 0 0 0 2.2 2.2 H58.6 a2.2 2.2 0 0 0 2.2 -2.2 V142.6"/><path d="M46.8 106.1 H65.5 L74.5 115 V140.4 a2.2 2.2 0 0 1 -2.2 2.2 H46.8 a2.2 2.2 0 0 1 -2.2 -2.2 V108.3 a2.2 2.2 0 0 1 2.2 -2.2 Z"/><path d="M65.5 106.1 V116.2 H74.5"/></g>
<g fill="none" stroke="#868686" stroke-width="3.2"><circle cx="60.9" cy="230.7" r="16.2"/><path d="M49.5 244.6 L30.5 263.6"/></g>
<g fill="none" stroke="#868686" stroke-width="3.2"><circle cx="42.3" cy="328" r="6.7"/><circle cx="65.7" cy="338.5" r="6.7"/><circle cx="42.3" cy="365.2" r="6.7"/><path d="M42.3 334.7 V358.5"/><path d="M65.7 345.2 C65.7 350 62 352.4 56 352.4 H49 C45 352.4 42.3 355 42.3 358"/></g>
<g fill="none" stroke="#868686" stroke-width="3.3" stroke-linejoin="miter"><path d="M45.65 452.3 V430.5 L77.5 450.6 L57.65 463.5"/><path d="M34.1 465 V463.5 a6.4 6.4 0 0 1 12.8 0 V465"/><path d="M31.5 465.1 H49.5"/><path d="M32.6 465.1 V471 a7.95 8.6 0 0 0 15.9 0 V465.1"/><path d="M27.5 459.5 L32.5 464 M53.5 459.5 L48.5 464 M26.8 470.3 H32.6 M48.5 470.3 H54.3 M27.5 481 L32.5 476.5 M53.5 481 L48.5 476.5"/></g>
<g fill="none" stroke="#868686" stroke-width="3.3"><path d="M49.3 577.4 H32.5 a2 2 0 0 1 -2 -2 V543.3 a2 2 0 0 1 2 -2 H73.7 a2 2 0 0 1 2 2 V561"/><path d="M38.8 584.8 H49.3 V577"/><circle cx="67" cy="575.9" r="12.4"/><path d="M61.8 573.8 L65.9 578 L61.8 582.1 M73.3 570.8 L69.2 574.7 L73.3 578.4" stroke-width="2.6"/></g>
<g fill="none" stroke="#868686" stroke-width="3.2" stroke-linejoin="round"><rect x="58.9" y="645.6" width="20.5" height="20.1" rx="2.5"/><path d="M30.6 655.6 H46.5 a1.8 1.8 0 0 1 1.8 1.8 V677.3 H67.5 a1.8 1.8 0 0 1 1.8 1.8 V694 a1.8 1.8 0 0 1 -1.8 1.8 H30.6 a1.8 1.8 0 0 1 -1.8 -1.8 V657.4 a1.8 1.8 0 0 1 1.8 -1.8 Z M28.8 677.3 H48.3 M48.3 677.3 V695.8"/></g>
<g fill="none" stroke="#868686" stroke-width="3.6"><path d="M55 799.6 H36.8 a1.8 1.8 0 0 1 -1.8 -1.8 V757.7 a1.8 1.8 0 0 1 1.8 -1.8 H63.5 L73.1 765.6 V778.8"/><path d="M55.2 769.4 a8.3 8.3 0 1 0 0 12.4"/></g><path fill="#868686" d="M61.4 754.5 L75 766.5 V768.3 H61.4 Z"/><g fill="#868686"><rect x="49.4" y="774.3" width="6.9" height="2.7"/><rect x="51.5" y="772.2" width="2.7" height="6.9"/><rect x="58.3" y="774.3" width="6.9" height="2.7"/><rect x="60.4" y="772.2" width="2.7" height="6.9"/></g><path fill="#868686" fill-rule="evenodd" d="M69.58 783.85 L71.14 781.06 L75.53 782.88 L74.66 785.95 L76.05 787.34 L79.12 786.47 L80.94 790.86 L78.15 792.42 L78.15 794.38 L80.94 795.94 L79.12 800.33 L76.05 799.46 L74.66 800.85 L75.53 803.92 L71.14 805.74 L69.58 802.95 L67.62 802.95 L66.06 805.74 L61.67 803.92 L62.54 800.85 L61.15 799.46 L58.08 800.33 L56.26 795.94 L59.05 794.38 L59.05 792.42 L56.26 790.86 L58.08 786.47 L61.15 787.34 L62.54 785.95 L61.67 782.88 L66.06 781.06 L67.62 783.85Z M73.1 793.4 a4.5 4.5 0 1 0 -9 0 a4.5 4.5 0 1 0 9 0 Z"/>
<g fill="none" stroke="#868686" stroke-width="3.2"><circle cx="54" cy="1838.8" r="25.4"/><circle cx="54" cy="1833.5" r="10.5"/><path d="M38.5 1858.5 C40.5 1848 47 1843.7 54 1843.7 C61 1843.7 67.5 1848 69.5 1858.5"/></g>
<g fill="none" stroke="#868686" stroke-width="3.4" stroke-linejoin="miter"><path d="M48.72 1926.92 L48.97 1921.20 L59.03 1921.20 L59.28 1926.92 L63.76 1928.77 L67.98 1924.91 L75.09 1932.02 L71.23 1936.24 L73.08 1940.72 L78.80 1940.97 L78.80 1951.03 L73.08 1951.28 L71.23 1955.76 L75.09 1959.98 L67.98 1967.09 L63.76 1963.23 L59.28 1965.08 L59.03 1970.80 L48.97 1970.80 L48.72 1965.08 L44.24 1963.23 L40.02 1967.09 L32.91 1959.98 L36.77 1955.76 L34.92 1951.28 L29.20 1951.03 L29.20 1940.97 L34.92 1940.72 L36.77 1936.24 L32.91 1932.02 L40.02 1924.91 L44.24 1928.77Z"/><circle cx="54" cy="1946" r="6.3"/></g>
<circle cx="599.6" cy="36.1" r="2.6" fill="#cccccc"/>
<circle cx="610.8" cy="36.1" r="2.6" fill="#cccccc"/>
<circle cx="622" cy="36.1" r="2.6" fill="#cccccc"/>
<g fill="none" stroke="#cccccc" stroke-width="2.6"><path d="M741.5 37 H769 M752.5 26 L741.5 37 L752.5 48"/></g>
<g fill="none" stroke="#8a8a8a" stroke-width="2.6"><path d="M799 37 H826.5 M815.5 26 L826.5 37 L815.5 48"/></g>
<g fill="none" stroke="#bdbdbd" stroke-width="2.4"><circle cx="1279.5" cy="30" r="10.3"/><path d="M1272 37.5 L1259.5 50"/></g>
<path fill="#d2d2d2" d="M1933.2 43.5 C1933.2 38 1936 35 1939.5 34 H1964 C1967.5 35 1970.2 38 1970.2 43.5 C1970.2 49 1961 52 1951.7 52 C1942.4 52 1933.2 49 1933.2 43.5 Z"/><path fill="#181818" d="M1940.9 36.2 H1962.9 V43.5 C1962.9 46.3 1957.9 47.6 1951.9 47.6 C1945.9 47.6 1940.9 46.3 1940.9 43.5 Z"/><g fill="none" stroke="#d2d2d2" stroke-width="4"><rect x="1938.8" y="22" width="11" height="11.6" rx="4.6"/><rect x="1953.7" y="22" width="11" height="11.6" rx="4.6"/></g><g fill="#d2d2d2"><rect x="1945.9" y="38" width="4" height="7.2" rx="2"/><rect x="1953.9" y="38" width="4" height="7.2" rx="2"/></g>
<path d="M1979.4 32.2 L1987.6 40.4 L1995.9 32.2" fill="none" stroke="#cccccc" stroke-width="2.2"/>
<g fill="none" stroke="#cccccc" stroke-width="2.6"><rect x="2203.9" y="23.4" width="11.1" height="24.8" rx="2.6"/><rect x="2222.3" y="23.4" width="8.5" height="9" rx="2.4"/><rect x="2222.3" y="39.2" width="8.5" height="9" rx="2.4"/><rect x="2260.3" y="21.3" width="29" height="29.5" rx="2.8"/><rect x="2318.7" y="21.3" width="29" height="29.5" rx="2.8"/><path d="M2318.7 41.6 H2347.7"/><rect x="2377.2" y="21.3" width="29" height="29.5" rx="2.8"/><path d="M2395.4 21.3 V50.8"/><path d="M2465.2 37 H2488.2" stroke-width="2.3"/><rect x="2568.5" y="27.1" width="20.5" height="20.7" rx="2.8" stroke-width="2.3"/></g>
<path d="M2261.5 22.5 H2272.7 V49.6 H2261.5 Z" fill="#cccccc"/>
<g fill="none" stroke="#cccccc" stroke-width="2.6"><rect x="2613.4" y="101.6" width="27" height="26.8" rx="2"/><path d="M2626.9 101.6 V128.4"/></g>
<circle cx="610.2" cy="116.1" r="2.6" fill="#cccccc"/>
<circle cx="621.4" cy="116.1" r="2.6" fill="#cccccc"/>
<circle cx="632.6" cy="116.1" r="2.6" fill="#cccccc"/>
<path d="M120.2 176.4 L130.6 186.3 L141 176.4" fill="none" stroke="#cccccc" stroke-width="2.3"/>
<path d="M156.00 220.25 L165.80 230.05 L156.00 239.85" fill="none" stroke="#cccccc" stroke-width="2.3"/>
<path d="M149.20 274.95 L159.80 284.65 L170.40 274.95" fill="none" stroke="#cccccc" stroke-width="2.3"/>
<path d="M174.07 319.25 L183.87 329.05 L174.07 338.85" fill="none" stroke="#cccccc" stroke-width="2.3"/>
<path d="M174.07 368.75 L183.87 378.55 L174.07 388.35" fill="none" stroke="#cccccc" stroke-width="2.3"/>
<path d="M167.27 423.45 L177.87 433.15 L188.47 423.45" fill="none" stroke="#cccccc" stroke-width="2.3"/>
<path d="M192.14 467.75 L201.94 477.55 L192.14 487.35" fill="none" stroke="#cccccc" stroke-width="2.3"/>
<path d="M192.14 517.25 L201.94 527.05 L192.14 536.85" fill="none" stroke="#cccccc" stroke-width="2.3"/>
<path d="M185.34 571.95 L195.94 581.65 L206.54 571.95" fill="none" stroke="#cccccc" stroke-width="2.3"/>
<path d="M203.41 621.45 L214.01 631.15 L224.61 621.45" fill="none" stroke="#cccccc" stroke-width="2.3"/>
<path d="M192.14 764.75 L201.94 774.55 L192.14 784.35" fill="none" stroke="#cccccc" stroke-width="2.3"/>
<path d="M174.07 863.75 L183.87 873.55 L174.07 883.35" fill="none" stroke="#cccccc" stroke-width="2.3"/>
<path d="M174.07 913.25 L183.87 923.05 L174.07 932.85" fill="none" stroke="#cccccc" stroke-width="2.3"/>
<path d="M174.07 962.75 L183.87 972.55 L174.07 982.35" fill="none" stroke="#cccccc" stroke-width="2.3"/>
<path d="M174.07 1012.25 L183.87 1022.05 L174.07 1031.85" fill="none" stroke="#cccccc" stroke-width="2.3"/>
<path d="M174.07 1061.75 L183.87 1071.55 L174.07 1081.35" fill="none" stroke="#cccccc" stroke-width="2.3"/>
<path d="M156.00 1259.75 L165.80 1269.55 L156.00 1279.35" fill="none" stroke="#cccccc" stroke-width="2.3"/>
<path d="M125.8 1917.2 L135.6 1927 L125.8 1936.8" fill="none" stroke="#cccccc" stroke-width="2.3"/>
<path d="M125.8 1966.7 L135.6 1976.5 L125.8 1986.3" fill="none" stroke="#cccccc" stroke-width="2.3"/>
<path d="M902.3 107.2 L920.5 125 M920.5 107.2 L902.3 125" fill="none" stroke="#ffffff" stroke-width="2.4"/>
<path d="M790.80 170.4 L800.40 180.5 L790.80 190.5" fill="none" stroke="#a9a9a9" stroke-width="2.3"/>
<path d="M933.20 170.4 L942.80 180.5 L933.20 190.5" fill="none" stroke="#a9a9a9" stroke-width="2.3"/>
<path d="M1138.60 170.4 L1148.20 180.5 L1138.60 190.5" fill="none" stroke="#a9a9a9" stroke-width="2.3"/>
<path d="M1284.50 170.4 L1294.10 180.5 L1284.50 190.5" fill="none" stroke="#a9a9a9" stroke-width="2.3"/>
<path d="M1490.00 170.4 L1499.60 180.5 L1490.00 190.5" fill="none" stroke="#a9a9a9" stroke-width="2.3"/>
<g fill="none" stroke="#ee9d28" stroke-width="2.5" stroke-linejoin="round"><path d="M1514 174 L1524 164.3 L1530 170 L1520 179.5 Z"/><path d="M1542.3 173.6 L1545.5 177 L1537.6 183.2 L1535 179.9 Z"/><path d="M1542.3 184.6 L1545.5 188 L1537.6 194.2 L1535 190.9 Z"/><path d="M1521.8 177.4 H1536.5 M1521.8 177.4 V189.8 H1535.5"/></g>
<circle cx="1149.19" cy="543.25" r="1.3" fill="#8a8a8a"/>
<circle cx="1154.69" cy="543.25" r="1.3" fill="#8a8a8a"/>
<circle cx="1160.19" cy="543.25" r="1.3" fill="#8a8a8a"/>
<path d="M29.7 2020.1 L37.6 2028.3 L29.7 2036.8 M47.3 2012.1 L39.2 2020.2 L47.3 2028.4" fill="none" stroke="#ffffff" stroke-width="2.6" stroke-linecap="round"/>
<g fill="none" stroke="#cccccc" stroke-width="2.4"><circle cx="110.2" cy="2025" r="13"/><path d="M104.3 2019.4 L116.2 2031.3 M116.2 2019.4 L104.3 2031.3"/></g>
<path d="M171.25 2012.6 L184.2 2035.6 H158.3 Z" fill="none" stroke="#cccccc" stroke-width="2.3" stroke-linejoin="round"/><rect x="169.9" y="2021.2" width="2.9" height="8" fill="#cccccc"/><rect x="169.9" y="2031" width="2.9" height="2" fill="#cccccc"/>
<g fill="none" stroke="#cccccc" stroke-width="2.4"><circle cx="261.8" cy="2020" r="2.5"/><path d="M261.8 2022.5 L253.8 2037.6 M261.8 2022.5 L269.8 2037.6 M256 2033.9 H267.5 M259.5 2028 H264.5"/><path d="M255.7 2014.9 Q251.5 2020.15 255.7 2025.4 M268 2014.9 Q272.2 2020.15 268 2025.4 M252.8 2011.7 Q245 2020 252.8 2028.3 M271 2011.7 Q278.8 2020 271 2028.3" stroke-linecap="round"/></g>
</svg>
</body></html>
